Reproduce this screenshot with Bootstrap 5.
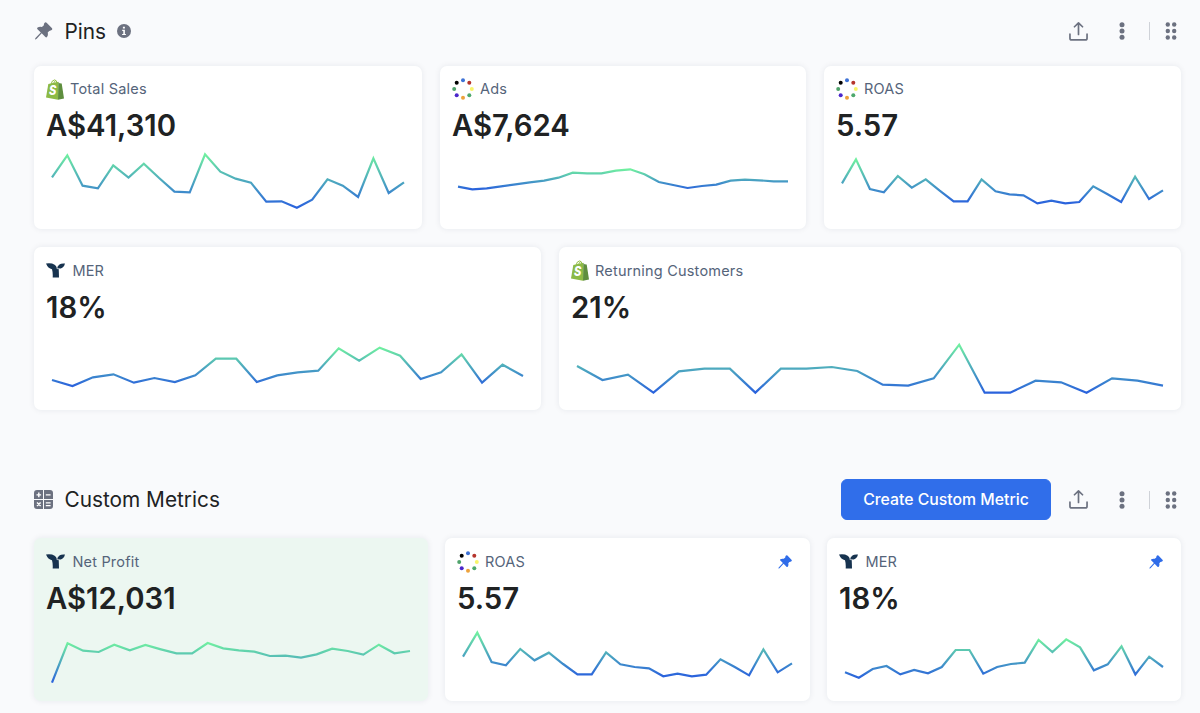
<!DOCTYPE html>
<html lang="en">
<head>
<meta charset="utf-8">
<meta name="viewport" content="width=device-width, initial-scale=1">
<title>Summary</title>
<link href="https://cdn.jsdelivr.net/npm/bootstrap@5.3.0/dist/css/bootstrap.min.css" rel="stylesheet">
<style>
  body { background: #f9fafc; font-family: Inter, "Liberation Sans", sans-serif; color: #202223; }
  .board { padding: 0 19px 12px 34px; }
  .section-head { height: 42px; color: #6c7180; }
  .section-head h2 { font-size: 20.8px; font-weight: 400; line-height: 28px; color: #202223; margin: 1px 0 0 11.5px; }
  .pins-head { margin-top: 10px; margin-bottom: 13.5px; }
  .custom-head { margin-top: 68.5px; margin-bottom: 17.5px; }
  .tiles { display: grid; gap: 18px; }
  .tiles-a { grid-template-columns: 388fr 366fr 357fr; }
  .tiles-b { grid-template-columns: 507fr 622fr; margin-top: 18.5px; }
  .tiles-c { grid-template-columns: 394fr 365fr 354fr; column-gap: 17px; }
  .tile { height: 163px; border: 0; border-radius: 7px; background: #fff; box-shadow: 0 0 6px rgba(30,40,60,.08); padding: 0 12px; min-width: 0; }
  .tile-green { background: #ecf7f1; }
  .tile-label { height: 22px; margin-top: 12.5px; font-size: 14.5px; line-height: 22px; color: #55647a; letter-spacing: .2px; }
  .tile-value { font-size: 29.3px; font-weight: 600; line-height: 36px; margin-top: 8px; height: 37.3px; }
  .spark { display: block; height: 72px; margin: 0 6px; overflow: visible; }
  .spark polyline { fill: none; stroke: url(#trend); stroke-width: 2.2; vector-effect: non-scaling-stroke; stroke-linejoin: miter; }
  .info { margin-left: 11px; }
  .bag { margin-right: 6px; }
  .ring { margin-right: 6px; }
  .whale { margin-left: .4px; margin-right: 7px; }
  .pinned { color: #2f6ce9; margin-right: 6px; }
  .kebab { margin-left: 31px; }
  .btn-create { --bs-btn-bg: #306eea; --bs-btn-border-color: #306eea; --bs-btn-color: #fff; width: 210px; height: 41px; border-radius: 6px; font-size: 15.8px; font-weight: 500; padding: 0; margin-right: 18px; }
  .rule { width: 1px; height: 18px; background: #cfd2d8; margin: 0 15px 0 24px; }
  svg { flex: none; }
</style>
</head>
<body>
<svg width="0" height="0" class="position-absolute" aria-hidden="true">
  <defs>
    <linearGradient id="trend" x1="0" y1="0" x2="0" y2="1">
      <stop offset="0" stop-color="#70f0a0"/><stop offset="1" stop-color="#2a62dd"/>
    </linearGradient>
    <symbol id="pin" viewBox="0 0 18 18">
      <path fill="currentColor" d="M10 .9q1-1.200 2.100-.1l5.200 5.200q1 1-.1 2-1 .8-2.500.9l-1.500 1.700q.7 2.700-.7 4.400-.8.8-1.600 0L7.200 11.300l-5 5.400q-1 .8-1.600.7-.2-.7.6-1.700L6.300 10.400 3 7.200q-.8-.8.1-1.600 1.700-1.300 4.300-.7l2-1.700q-.2-1.300.6-2.300z"/>
    </symbol>
    <symbol id="share" viewBox="0 0 18 18">
      <path fill="none" stroke="currentColor" stroke-width="1.6" stroke-linecap="round" stroke-linejoin="round" d="M.9 11.500v3.800q0 1.700 1.700 1.700h12.800q1.700 0 1.700-1.700v-3.800M9 11.800V1M5.200 4.500 9 .9l3.800 3.600"/>
    </symbol>
    <symbol id="kebab" viewBox="0 0 6 18">
      <g fill="currentColor"><circle cx="3" cy="2.700" r="2.500"/><circle cx="3" cy="9" r="2.500"/><circle cx="3" cy="15.300" r="2.500"/></g>
    </symbol>
    <symbol id="grip" viewBox="0 0 12 18">
      <g fill="currentColor"><circle cx="2.800" cy="2.500" r="2.200"/><circle cx="9.200" cy="2.500" r="2.200"/><circle cx="2.800" cy="9" r="2.200"/><circle cx="9.200" cy="9" r="2.200"/><circle cx="2.800" cy="15.500" r="2.200"/><circle cx="9.200" cy="15.500" r="2.200"/></g>
    </symbol>
    <symbol id="bag" viewBox="0 0 18 21">
      <path fill="none" stroke="#95bf47" stroke-width="1" d="M5 5.200Q6 1 8.600.9q2.200 0 2.500 3.700M7.500 4.800Q8.200 1.700 10 1.500"/>
      <path fill="#8cba45" d="M2.300 5 12.300 2.800 12 20.800 0 18.600z"/>
      <path fill="#5e8e3e" d="m12.300 2.900 1.200 1.300 2.200.3 2.300 14.900-6 1.400z"/>
      <text x="3" y="16.300" font-family="Inter" font-size="13" font-weight="800" font-style="italic" fill="#fff" textLength="7.500" lengthAdjust="spacingAndGlyphs">S</text>
    </symbol>
    <symbol id="whale" viewBox="0 0 19 15">
      <path fill="#17334f" d="M0 .5q5.500-.8 8.600 1.200 1.700 1.200 2.200 3 .5-2.200 2.500-3.300Q15.500.1 19 .5q-.5 3-2.700 4.200-1.300.8-3.600.9.200 4.500.3 8.900H6.700Q7 9.500 6 6.200 2 5.500 0 .5z"/>
      <path fill="none" stroke="#fff" stroke-width=".6" d="M10.900 5.500q.2-2.600 2.200-4.200M10.900 5.500q1.200.3 2.400.1"/>
    </symbol>
    <symbol id="ring" viewBox="0 0 22 22">
      <circle cx="11" cy="2.200" r="2" fill="#3e72d6"/><circle cx="17.300" cy="4.700" r="2" fill="#b5352d"/><circle cx="19.800" cy="11" r="2" fill="#f8f56a"/><circle cx="17.300" cy="17.300" r="2" fill="#4ea86c"/><circle cx="11" cy="19.800" r="2" fill="#eda23d"/><circle cx="4.700" cy="17.300" r="2" fill="#4b27cb"/><circle cx="2.200" cy="11" r="2" fill="#50a36c"/><circle cx="4.700" cy="4.700" r="2" fill="#000"/>
    </symbol>
  </defs>
</svg>

<main class="board">
  <header class="section-head pins-head d-flex align-items-center">
    <svg width="19" height="18"><use href="#pin"/></svg>
    <h2>Pins</h2>
    <svg class="info" width="14" height="14" viewBox="0 0 14 14"><circle cx="7" cy="7" r="7" fill="#6c7180"/><path fill="#fff" d="M5.900 2.800h2v1.800h-2zM5.200 5.800h2.700v4.100h1v1H5.100v-1h1.200V6.900H5.200z"/></svg>
    <div class="d-flex align-items-center ms-auto pe-1">
      <svg width="19" height="19"><use href="#share"/></svg>
      <svg class="kebab" width="6" height="18"><use href="#kebab"/></svg>
      <span class="rule"></span>
      <svg width="12" height="18"><use href="#grip"/></svg>
    </div>
  </header>

  <section class="tiles tiles-a">
    <article class="tile card">
      <div class="tile-label d-flex align-items-center"><svg class="bag" width="18" height="21"><use href="#bag"/></svg><span>Total Sales</span></div>
      <div class="tile-value">A$41,310</div>
      <svg class="spark" viewBox="0 15 23 216" preserveAspectRatio="none" data-series="112,46,137,145,76,113,71,114,155,157,43,95,116,128,185,184,203,179,118,137,171,55,159,127"></svg>
    </article>
    <article class="tile card">
      <div class="tile-label d-flex align-items-center"><svg class="ring" width="22" height="22"><use href="#ring"/></svg><span>Ads</span></div>
      <div class="tile-value">A$7,624</div>
      <svg class="spark" viewBox="0 15 23 216" preserveAspectRatio="none" data-series="140,148,145,139,133,127,122,113,98,100,100,92,88,103,126,135,144,138,134,122,119,121,124,124"></svg>
    </article>
    <article class="tile card">
      <div class="tile-label d-flex align-items-center"><svg class="ring" width="22" height="22"><use href="#ring"/></svg><span>ROAS</span></div>
      <div class="tile-value">5.57</div>
      <svg class="spark" viewBox="0 15 23 216" preserveAspectRatio="none" data-series="130,58,147,157,108,143,118,152,184,184,118,154,163,166,190,182,190,186,139,162,186,110,177,151"></svg>
    </article>
  </section>

  <section class="tiles tiles-b">
    <article class="tile card">
      <div class="tile-label d-flex align-items-center"><svg class="whale" width="19" height="15"><use href="#whale"/></svg><span>MER</span></div>
      <div class="tile-value">18%</div>
      <svg class="spark" viewBox="0 -9 23 216" preserveAspectRatio="none" data-series="150,168,142,133,158,144,156,136,86,86,156,136,127,122,55,92,53,77,147,127,73,158,104,138"></svg>
    </article>
    <article class="tile card">
      <div class="tile-label d-flex align-items-center"><svg class="bag" width="18" height="21"><use href="#bag"/></svg><span>Returning Customers</span></div>
      <div class="tile-value">21%</div>
      <svg class="spark" viewBox="0 261 23 216" preserveAspectRatio="none" data-series="378,420,404,458,394,386,386,458,386,386,381,393,434,437,415,314,458,458,422,427,458,415,422,437"></svg>
    </article>
  </section>

  <header class="section-head custom-head d-flex align-items-center">
    <svg width="19" height="19" viewBox="0 0 19 19">
      <path fill="#6c7180" d="M3 0h6v9H0V3q0-3 3-3zM10 0h6q3 0 3 3v6h-9zM0 10h9v9H3q-3 0-3-3zM10 10h9v6q0 3-3 3h-6z"/>
      <path fill="none" stroke="#fff" stroke-width="1.400" d="M2.500 4.900h4.600M4.800 2.600v4.600M11.800 4.900h4.800M3 12.400l3.600 3.600M6.600 12.400 3 16M11.800 12.900h4.800M11.800 15.600h4.800"/>
    </svg>
    <h2>Custom Metrics</h2>
    <div class="d-flex align-items-center ms-auto pe-1">
      <button type="button" class="btn btn-create">Create Custom Metric</button>
      <svg width="19" height="19"><use href="#share"/></svg>
      <svg class="kebab" width="6" height="18"><use href="#kebab"/></svg>
      <span class="rule"></span>
      <svg width="12" height="18"><use href="#grip"/></svg>
    </div>
  </header>

  <section class="tiles tiles-c">
    <article class="tile tile-green card">
      <div class="tile-label d-flex align-items-center"><svg class="whale" width="19" height="15"><use href="#whale"/></svg><span>Net Profit</span></div>
      <div class="tile-value">A$12,031</div>
      <svg class="spark" viewBox="0 -6 23 216" preserveAspectRatio="none" data-series="188,70,92,96,74,91,75,88,100,100,69,85,91,95,108,107,113,103,86,93,104,74,100,93"></svg>
    </article>
    <article class="tile card">
      <div class="tile-label d-flex align-items-center"><svg class="ring" width="22" height="22"><use href="#ring"/></svg><span>ROAS</span><svg width="14" height="14" class="pinned ms-auto"><use href="#pin"/></svg></div>
      <div class="tile-value">5.57</div>
      <svg class="spark" viewBox="0 264 23 216" preserveAspectRatio="none" data-series="380,308,396,406,357,391,368,402,433,433,367,403,411,415,439,431,439,434,388,411,436,358,427,400"></svg>
    </article>
    <article class="tile card">
      <div class="tile-label d-flex align-items-center"><svg class="whale" width="19" height="15"><use href="#whale"/></svg><span>MER</span><svg width="14" height="14" class="pinned ms-auto"><use href="#pin"/></svg></div>
      <div class="tile-value">18%</div>
      <svg class="spark" viewBox="0 264 23 216" preserveAspectRatio="none" data-series="427,443,417,408,433,420,430,411,360,360,431,411,402,398,330,366,328,352,421,403,349,433,380,411"></svg>
    </article>
  </section>
</main>

<script src="https://cdn.jsdelivr.net/npm/bootstrap@5.3.0/dist/js/bootstrap.bundle.min.js"></script>
<script>
  // One polyline per sparkline: x is the day index, y comes from data-series
  document.querySelectorAll('.spark').forEach(function (svg) {
    var line = document.createElementNS('http://www.w3.org/2000/svg', 'polyline');
    line.setAttribute('points', svg.dataset.series.split(',').map(function (y, x) { return x + ',' + y; }).join(' '));
    svg.appendChild(line);
  });
</script>
</body>
</html>
